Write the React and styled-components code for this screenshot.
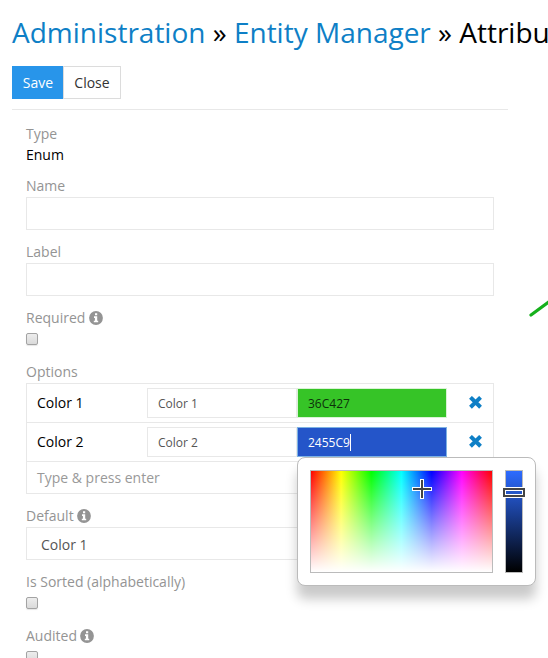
import React from "react";
import styled, { createGlobalStyle } from "styled-components";

const GlobalStyle = createGlobalStyle`
  * { box-sizing: border-box; }
  html, body { margin: 0; background: #fff; overflow: hidden; }
  body, input, button { font-family: "Open Sans", sans-serif; font-size: 14px; line-height: 20px; color: #000; }
`;

const Page = styled.main`
  position: relative;
  width: 548px;
  height: 658px;
  overflow: hidden;
  padding: 13px 0 0 12px;
`;

const Title = styled.h1`
  margin: 0;
  height: 39px;
  font-size: 28px;
  font-weight: 400;
  line-height: 38px;
  white-space: nowrap;
`;

const Crumb = styled.a`
  color: #0e7fc6;
`;

const Toolbar = styled.div`
  display: flex;
  width: 496px;
  height: 58px;
  padding: 14px 0 11px;
  border-bottom: 1px solid #e8e8e8;
`;

const Button = styled.button`
  width: ${(p) => (p.$primary ? 51 : 58)}px;
  height: 33px;
  padding: ${(p) => (p.$primary ? "0 0 0 1px" : "0")};
  border: 1px solid ${(p) => (p.$primary ? "#2895ea" : "#dcdcdc")};
  background: ${(p) => (p.$primary ? "#2895ea" : "#fff")};
  color: ${(p) => (p.$primary ? "#fff" : "#333")};
`;

const Form = styled.form`
  width: 468px;
  margin: 15px 0 0 14px;
`;

const Group = styled.div`
  margin-bottom: 13px;
`;

const Label = styled.label`
  display: flex;
  align-items: center;
  height: 20px;
  padding-bottom: 2px;
  gap: 3.5px;
  color: #949494;
`;

const StaticValue = styled.div`
  height: 19px;
  line-height: 20px;
`;

const Input = styled.input`
  display: block;
  width: 100%;
  height: 33px;
  padding: 0 10px;
  border: 1px solid #e8e8e8;
  border-radius: 0;
  background: #fff;
  outline: none;
`;

const CheckArea = styled.div`
  height: 21px;
  padding-top: 4px;
`;

const Checkbox = styled.span`
  display: block;
  width: 12px;
  height: 12px;
  border: 1px solid #a3a3a3;
  border-radius: 2px;
  background: linear-gradient(#ededed, #dadada);
  box-shadow: 0 1px 1px rgba(0, 0, 0, 0.1);
`;

const OptionList = styled.div`
  height: 111px;
  border: 1px solid #e8e8e8;
`;

const OptionRow = styled.div`
  display: grid;
  grid-template-columns: 110px 150px 150px 1fr;
  height: 39px;
  padding: 4px 0 4px 10px;
  border-bottom: 1px solid #e8e8e8;
`;

const OptionName = styled.span`
  line-height: 30px;
`;

const Cell = styled.div`
  display: flex;
  align-items: center;
  height: 30px;
  padding: 1px 10px 0;
  border: 1px solid ${(p) => p.$border || "#e8e8e8"};
  background: ${(p) => p.$fill || "#fff"};
  color: ${(p) => p.$ink || "#555"};
  font-size: 12px;
`;

const Caret = styled.span`
  width: 1px;
  height: 17px;
  background: #fff;
`;

const Remove = styled.span`
  display: block;
  padding: 8px 0 0 22px;
  line-height: 0;
`;

const AddOption = styled.div`
  height: 32px;
  padding-left: 10px;
  line-height: 32px;
  color: #999;
`;

const Select = styled.div`
  height: 33px;
  padding-left: 14px;
  border: 1px solid #e8e8e8;
  line-height: 34px;
  color: #555;
`;

const Picker = styled.div`
  position: absolute;
  left: 297px;
  top: 457px;
  display: flex;
  gap: 12px;
  width: 239px;
  height: 129px;
  padding: 12px;
  border: 1px solid #bbb;
  border-radius: 8px;
  background: #fff;
  box-shadow: 0 13px 12px rgba(0, 0, 0, 0.21);
`;

const Spectrum = styled.div`
  position: relative;
  width: 183px;
  height: 103px;
  border: 1px solid #bbb;
  background: linear-gradient(rgba(255, 255, 255, 0), #fff),
    linear-gradient(90deg, #f00, #ff0, #0f0, #0ff, #00f, #f0f, #f00);
`;

const Brightness = styled.div`
  position: relative;
  width: 18px;
  height: 103px;
  border: 1px solid #bbb;
  background: linear-gradient(#2d6bff, #000);
`;

const Cross = styled.svg`
  position: absolute;
  left: 101px;
  top: 8px;
`;

const Slider = styled.svg`
  position: absolute;
  left: -3px;
  top: 16px;
`;

const PenMark = styled.svg`
  position: absolute;
  left: 524px;
  top: 296px;
`;

const Info = () => (
  <svg width="14" height="14" viewBox="0 0 14 14">
    <circle cx="7" cy="7" r="6.9" fill="#949494" />
    <path d="M6 2.2h2.2v2H6zM5 5.3h3.2v4.4h1v1.6H4.8V9.7h1.1V6.9H5z" fill="#fff" />
  </svg>
);

const RemoveIcon = () => (
  <svg width="13" height="13" viewBox="0 0 13 13">
    <path d="M2.9 2.8L10.1 9.8M10.1 2.8L2.9 9.8" stroke="#0e7fc6" strokeWidth="4" strokeLinecap="square" />
  </svg>
);

const CheckField = ({ label, info }) => (
  <Group>
    <Label>{label}{info && <Info />}</Label>
    <CheckArea><Checkbox role="checkbox" aria-checked="false" /></CheckArea>
  </Group>
);

const options = [
  { name: "Color 1", hex: "36C427", border: "#d9f3d5", ink: "#0d300a" },
  { name: "Color 2", hex: "2455C9", border: "#7db2e4", ink: "#fff", active: true },
];

export default function App() {
  return (
    <Page>
      <GlobalStyle />
      <Title>
        <Crumb>Administration</Crumb> » <Crumb>Entity Manager</Crumb> » Attribu
      </Title>
      <Toolbar>
        <Button $primary>Save</Button>
        <Button>Close</Button>
      </Toolbar>
      <Form>
        <Group>
          <Label>Type</Label>
          <StaticValue>Enum</StaticValue>
        </Group>
        <Group>
          <Label>Name</Label>
          <Input />
        </Group>
        <Group>
          <Label>Label</Label>
          <Input />
        </Group>
        <CheckField label="Required" info />
        <Group>
          <Label>Options</Label>
          <OptionList>
            {options.map((o) => (
              <OptionRow key={o.name}>
                <OptionName>{o.name}</OptionName>
                <Cell>{o.name}</Cell>
                <Cell $fill={`#${o.hex}`} $border={o.border} $ink={o.ink}>
                  {o.hex}
                  {o.active && <Caret />}
                </Cell>
                <Remove><RemoveIcon /></Remove>
              </OptionRow>
            ))}
            <AddOption>Type &amp; press enter</AddOption>
          </OptionList>
        </Group>
        <Group>
          <Label>Default<Info /></Label>
          <Select>Color 1</Select>
        </Group>
        <CheckField label="Is Sorted (alphabetically)" />
        <CheckField label="Audited" info />
      </Form>
      <PenMark width="24" height="24" viewBox="0 0 24 24">
        <path d="M7 19L26 5" stroke="#16b01c" strokeWidth="3.2" strokeLinecap="round" />
      </PenMark>
      <Picker>
        <Spectrum>
          <Cross width="20" height="20" viewBox="0 0 20 20" shapeRendering="crispEdges">
            <path d="M8 0h4v8h8v4h-8v8H8v-8H0V8h8z" fill="#fff" />
            <path d="M9 1h2v8h8v2h-8v8H9v-8H1V9h8z" fill="#444" />
          </Cross>
        </Spectrum>
        <Brightness>
          <Slider width="22" height="11" viewBox="0 0 22 11" shapeRendering="crispEdges">
            <rect y="0" width="22" height="11" fill="#fff" />
            <rect y="1" width="22" height="9" fill="#444" />
            <rect x="2" y="3" width="18" height="5" fill="#fff" />
            <rect x="3" y="4" width="16" height="3" fill="#2456c8" />
          </Slider>
        </Brightness>
      </Picker>
    </Page>
  );
}
